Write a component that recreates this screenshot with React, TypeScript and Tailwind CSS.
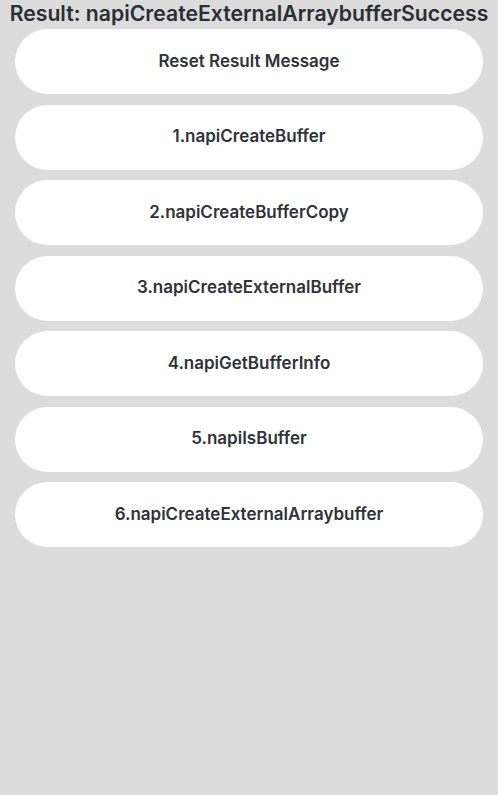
const buttons = [
  "Reset Result Message",
  "1.napiCreateBuffer",
  "2.napiCreateBufferCopy",
  "3.napiCreateExternalBuffer",
  "4.napiGetBufferInfo",
  "5.napiIsBuffer",
  "6.napiCreateExternalArraybuffer",
];

const App = () => {
  return (
    <div className="h-[795px] w-[498px] bg-[#dcdcdc] font-['Inter',sans-serif]">
      <p className="text-center text-[21.2px] font-semibold leading-[27px] text-[#2a2e35]">
        Result: napiCreateExternalArraybufferSuccess
      </p>
      <div className="mt-[2px] flex flex-col gap-[10.5px] px-[15px]">
        {buttons.map((label) => (
          <button
            key={label}
            type="button"
            className="h-[65px] w-full rounded-full bg-white text-[17px] font-semibold text-[#2f3238]"
          >
            {label}
          </button>
        ))}
      </div>
    </div>
  );
};

export default App;
